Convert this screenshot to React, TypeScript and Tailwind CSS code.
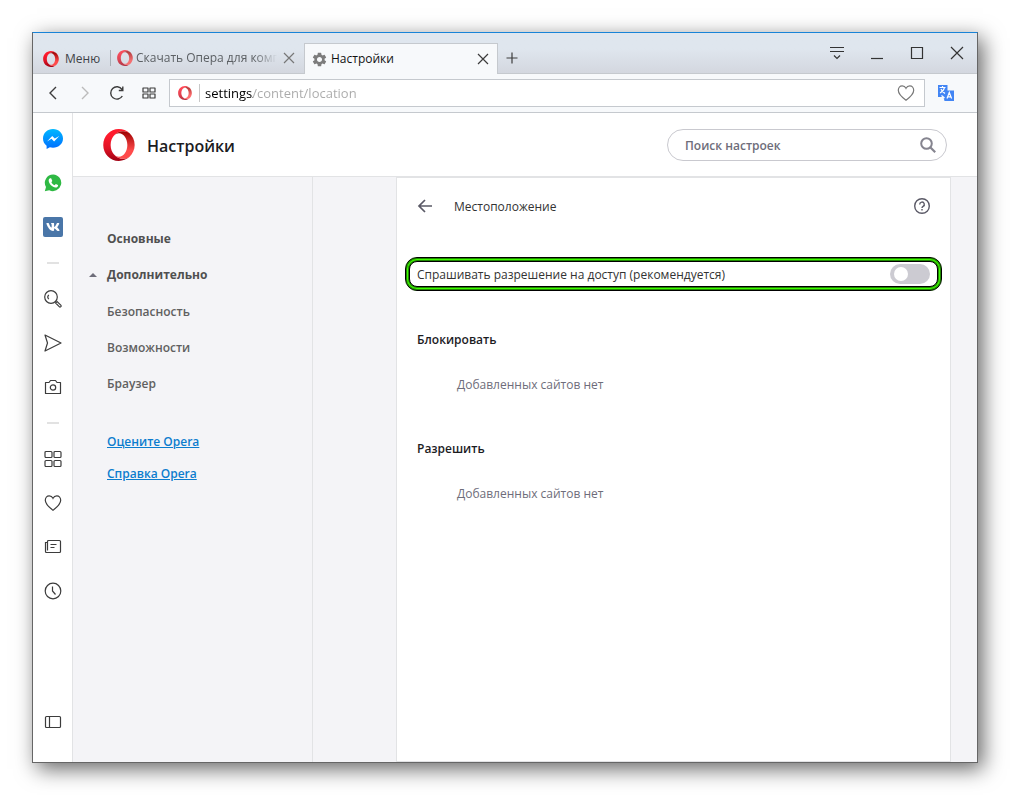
// App.tsx
import { useId, useState } from "react";
import type { ReactNode } from "react";
import { FaVk } from "react-icons/fa";
import { MdSettings } from "react-icons/md";

type IconProps = {
  className?: string;
};

function OperaLogo({ className }: IconProps) {
  const id = useId();
  return (
    <svg className={className} viewBox="3 3 76 76" aria-hidden="true">
      <defs>
        <linearGradient id={`${id}-left`} x1="0" y1="0" x2="0" y2="1">
          <stop offset="0.2" stopColor="#ff1b2d" />
          <stop offset="0.6" stopColor="#e01426" />
          <stop offset="1" stopColor="#a00012" />
        </linearGradient>
        <linearGradient id={`${id}-right`} x1="0" y1="0" x2="0" y2="1">
          <stop offset="0" stopColor="#9c0000" />
          <stop offset="0.7" stopColor="#ff4b4b" />
        </linearGradient>
      </defs>
      <path
        fill={`url(#${id}-left)`}
        d="M28.3 62.4c-4.2-4.9-6.9-12.2-7.1-20.4v-2c.2-8.2 2.9-15.5 7.1-20.4 5.4-7 13.4-11.5 22.3-11.5 5.500 0 10.600 1.700 15 4.600C59 6.800 50.200 3.100 40.600 3.100 19.900 3.100 3.600 20 3.600 41s16.300 37.900 37 37.900c9.600 0 18.400-3.700 25-9.700-4.400 2.900-9.500 4.600-15 4.600-8.900 0-16.900-4.400-22.300-11.400z"
      />
      <path
        fill={`url(#${id}-right)`}
        d="M28.300 19.600c3.400-4 7.900-6.500 12.700-6.500 10.900 0 19.800 12.500 19.800 27.900S51.900 68.900 41 68.900c-4.900 0-9.300-2.400-12.700-6.500 5.400 7 13.400 11.500 22.300 11.500 5.500 0 10.600-1.700 15-4.600C73.200 62.300 78.200 52.200 78.200 41s-5-21.400-12.600-28.300c-4.400-2.900-9.500-4.600-15-4.600-8.900 0-16.900 4.500-22.300 11.500z"
      />
    </svg>
  );
}

function LineIcon({ size = 20, children }: { size?: number; children: ReactNode }) {
  return (
    <svg
      width={size}
      height={size}
      viewBox={`0 0 ${size} ${size}`}
      fill="none"
      stroke="currentColor"
      strokeWidth="1.2"
      aria-hidden="true"
    >
      {children}
    </svg>
  );
}

function Messenger() {
  return (
    <svg width="20" height="20" viewBox="0 0 20 20" aria-hidden="true">
      <defs>
        <linearGradient id="messenger" x1="0" y1="0" x2="0" y2="1">
          <stop offset="0" stopColor="#00b8ff" />
          <stop offset="1" stopColor="#006dff" />
        </linearGradient>
      </defs>
      <path
        fill="url(#messenger)"
        d="M10 0C4.400 0 0 4.100 0 9.400c0 3 1.400 5.600 3.600 7.300V20l3.300-1.700c1 .3 2 .4 3.100.4 5.600 0 10-4.100 10-9.300S15.600 0 10 0z"
      />
      <path fill="#fff" d="M4 12.500 9.200 7l2.600 2.600L16.300 7l-5.200 5.500-2.600-2.700z" />
    </svg>
  );
}

function WhatsApp() {
  return (
    <svg width="18" height="18" viewBox="0 0 18 18" aria-hidden="true">
      <path
        fill="#2fb944"
        d="M9.200.5a8.300 8.300 0 0 0-7.200 12.500L.8 17.300l4.400-1.100A8.300 8.300 0 1 0 9.200.5z"
      />
      <path
        fill="#fff"
        d="M6 4.300c-.9.500-1.400 1.300-1.300 2.500.3 3.200 3.500 6.300 6.800 6.700 1.200.1 2.300-.6 2.500-1.500.1-.4.100-.7 0-.9l-2.200-1.100-1.200 1.200c-1.500-.6-2.600-1.600-3.200-2.900l.9-1.200-1-2.500c-.3-.4-.9-.5-1.300-.3z"
      />
    </svg>
  );
}

function Vkontakte() {
  return (
    <span className="flex size-5 items-center justify-center rounded-xs bg-[#4a76a8] text-white">
      <FaVk size={14} />
    </span>
  );
}

function GridIcon({ size }: { size: number }) {
  const cell = size / 2 - 2;
  const far = size / 2 + 1;
  return (
    <LineIcon size={size}>
      <rect x="1" y="1.500" width={cell} height={cell - 1} rx="1" />
      <rect x={far} y="1.500" width={cell} height={cell - 1} rx="1" />
      <rect x="1" y={far + 0.5} width={cell} height={cell - 1} rx="1" />
      <rect x={far} y={far + 0.5} width={cell} height={cell - 1} rx="1" />
    </LineIcon>
  );
}

function HeartIcon() {
  return (
    <LineIcon size={18}>
      <path d="M9 16.300C4.600 13 1.300 10 1.300 6.300c0-2.600 1.700-4.500 3.900-4.500 1.700 0 3 .9 3.800 2.500.8-1.600 2.100-2.500 3.800-2.500 2.200 0 3.900 1.900 3.900 4.500 0 3.700-3.300 6.700-7.700 10z" />
    </LineIcon>
  );
}

function CloseIcon({ size }: { size: number }) {
  return (
    <LineIcon size={size}>
      <path d={`M1 1 ${size - 1} ${size - 1}M${size - 1} 1 1 ${size - 1}`} />
    </LineIcon>
  );
}

function TranslateIcon() {
  return (
    <svg width="16" height="16" viewBox="0 0 16 16" aria-hidden="true">
      <path fill="#4285f4" d="M0 0h9.500v5.500H16V16H6.500l-1-4H0z" />
      <path
        fill="none"
        stroke="#fff"
        strokeWidth="1.200"
        d="M1.500 2.500h6M4.500 1v1.500M6.500 2.500C6 5 4 7 2 8M3 4c1 2.500 2.500 3.500 4 4.500M3.500 10.500l3 2.500M9 13.500l2.300-6 2.300 6M9.800 11.800h3"
      />
    </svg>
  );
}

function SidebarButton({ label, children }: { label: string; children: ReactNode }) {
  return (
    <button className="flex h-11 w-full items-center justify-center text-[#3c3c3c]" aria-label={label}>
      {children}
    </button>
  );
}

function SidebarDivider() {
  return (
    <div className="flex h-7 items-center justify-center">
      <span className="h-0.5 w-3 bg-[#e2e2e2]" />
    </div>
  );
}

function Sidebar() {
  return (
    <aside className="flex w-10 shrink-0 flex-col border-r border-[#e2e3e5] bg-white pt-1 pb-[18px]">
      <SidebarButton label="Messenger">
        <Messenger />
      </SidebarButton>
      <SidebarButton label="WhatsApp">
        <WhatsApp />
      </SidebarButton>
      <SidebarButton label="ВКонтакте">
        <Vkontakte />
      </SidebarButton>
      <SidebarDivider />
      <SidebarButton label="Поиск">
        <LineIcon size={18}>
          <circle cx="7" cy="7" r="6.300" />
          <path d="M4.800 9.200a3.200 3.200 0 0 1 0-4.400M11.600 13l1.500-1.500 3.700 3.600a1.100 1.100 0 0 1-1.600 1.600z" />
        </LineIcon>
      </SidebarButton>
      <SidebarButton label="Моя лента">
        <LineIcon size={18}>
          <path d="M1 1 17 9 1 17 3.500 9z" strokeLinejoin="round" />
        </LineIcon>
      </SidebarButton>
      <SidebarButton label="Снимок">
        <LineIcon size={18}>
          <path d="M1.500 4.500H5l1.500-2h5l1.500 2h3.500v11h-15z" strokeLinejoin="round" />
          <circle cx="9" cy="9.500" r="2.700" />
        </LineIcon>
      </SidebarButton>
      <SidebarDivider />
      <SidebarButton label="Экспресс-панель">
        <GridIcon size={18} />
      </SidebarButton>
      <SidebarButton label="Закладки">
        <HeartIcon />
      </SidebarButton>
      <SidebarButton label="Новости">
        <LineIcon size={18}>
          <path d="M3.500 12.500v-9a1 1 0 0 1 1-1h11a1 1 0 0 1 1 1v10a1 1 0 0 1-1 1h-13a1 1 0 0 1-1-1v-9h2M6.500 6.500h6M6.500 9.500h4" />
        </LineIcon>
      </SidebarButton>
      <SidebarButton label="История">
        <LineIcon size={18}>
          <circle cx="9" cy="9" r="7.800" />
          <path d="M8.500 4.500V9l3 3.500" />
        </LineIcon>
      </SidebarButton>
      <div className="mt-auto">
        <SidebarButton label="Боковая панель">
          <LineIcon size={18}>
            <rect x="1.500" y="3.500" width="15" height="11" rx="1" />
            <path d="M5.500 3.500v11" />
          </LineIcon>
        </SidebarButton>
      </div>
    </aside>
  );
}

function TabBar() {
  return (
    <div className="flex h-[41px] border-b border-[#c5c9ce] bg-linear-to-b from-[#dfe6ee] from-40% to-[#d3d7df]">
      <button className="mt-3 flex w-[67px] items-center gap-1.5 pl-2.5 text-xs text-[#3f4347]">
        <OperaLogo className="size-4 shrink-0" />
        Меню
      </button>
      <span className="mt-[17px] ml-[10px] h-4 w-px bg-[#a9aeb4]" />
      <div className="mt-2.5 ml-1.5 flex w-[180px] items-center gap-[3px] text-xs text-[#5c6064]">
        <OperaLogo className="size-4 shrink-0 opacity-75" />
        <span className="w-[144px] overflow-hidden whitespace-nowrap [mask-image:linear-gradient(to_right,black_82%,transparent_98%)]">
          Скачать Опера для компь
        </span>
        <button className="shrink-0 text-[#777]" aria-label="Закрыть вкладку">
          <CloseIcon size={12} />
        </button>
      </div>
      <div className="z-10 mt-2.5 -mb-px ml-[7px] flex w-[194px] items-center border border-b-0 border-[#c5c9ce] bg-[#f7f9fb] pr-2 pl-1.5 text-xs text-[#111]">
        <MdSettings className="mr-[3px] text-[#7c7c7c]" size={17} />
        Настройки
        <button className="ml-auto text-[#3c3c3c]" aria-label="Закрыть вкладку">
          <CloseIcon size={12} />
        </button>
      </div>
      <button className="mt-2.5 ml-2 text-[#3c3c3c]" aria-label="Новая вкладка">
        <LineIcon size={12}>
          <path d="M6 .5v11M.5 6h11" />
        </LineIcon>
      </button>
      <div className="ml-auto flex h-10 text-[#333]">
        <button className="flex w-10 items-center justify-center" aria-label="Меню вкладок">
          <LineIcon size={16}>
            <path d="M1 2.500h14M1 6.500h14M5 10.500l3 3 3-3" />
          </LineIcon>
        </button>
        <button className="flex w-10 items-center justify-center" aria-label="Свернуть">
          <LineIcon size={16}>
            <path d="M2 13.500h12" />
          </LineIcon>
        </button>
        <button className="flex w-10 items-center justify-center" aria-label="Развернуть">
          <LineIcon size={16}>
            <path d="M2.500 2.500h11v11h-11z" />
          </LineIcon>
        </button>
        <button className="flex w-10 items-center justify-center" aria-label="Закрыть">
          <CloseIcon size={14} />
        </button>
      </div>
    </div>
  );
}

function Toolbar() {
  const [url, setUrl] = useState("settings/content/location");
  return (
    <div className="flex h-[39px] items-center border-b border-[#c5c9ce] bg-[#f7f9fb] pl-1 text-[#3c3c3c]">
      <button className="flex w-8 justify-center" aria-label="Назад">
        <LineIcon size={16}>
          <path d="M11 2 5 8l6 6" strokeWidth="1.400" />
        </LineIcon>
      </button>
      <button className="flex w-8 justify-center text-[#bbb]" aria-label="Вперёд">
        <LineIcon size={16}>
          <path d="m5 2 6 6-6 6" strokeWidth="1.400" />
        </LineIcon>
      </button>
      <button className="flex w-8 justify-center" aria-label="Обновить">
        <LineIcon size={16}>
          <path d="M13.300 11A6.200 6.200 0 1 1 13 4.400M13.800 1.500v4h-4" strokeWidth="1.400" />
        </LineIcon>
      </button>
      <button className="flex w-8 justify-center" aria-label="Экспресс-панель">
        <LineIcon size={14}>
          <path d="M1 2h5v4H1zM8 2h5v4H8zM1 8h5v4H1zM8 8h5v4H8z" strokeLinejoin="round" />
        </LineIcon>
      </button>
      <div className="ml-1 flex h-7 flex-1 items-center border border-[#c5c9ce] bg-white pl-2">
        <OperaLogo className="size-[14px] opacity-80" />
        <span className="ml-[7px] h-[18px] w-px bg-[#c8c8c8]" />
        {/* the host part of the address is darker than its path */}
        <input
          className="ml-[5px] min-w-0 flex-1 bg-linear-to-r from-black from-[48px] to-[#a9a9a9] to-[48px] bg-clip-text pt-0.5 text-[13px] text-transparent outline-none"
          aria-label="Адрес"
          value={url}
          onChange={(e) => setUrl(e.target.value)}
        />
        <button className="mr-[9px] text-[#777]" aria-label="Добавить в закладки">
          <HeartIcon />
        </button>
      </div>
      <button className="mr-[23px] ml-[13px]" aria-label="Перевести">
        <TranslateIcon />
      </button>
    </div>
  );
}

function PageHeader() {
  return (
    <header className="flex h-16 items-center border-b border-[#e2e3e5] bg-white px-[30px]">
      <OperaLogo className="size-8" />
      <h1 className="ml-3 pt-0.5 text-base font-semibold text-[#1c1c1f]">Настройки</h1>
      <label className="ml-auto flex h-8 w-[280px] items-center rounded-full border border-[#c9c9cf] pr-2.5 pl-[17px]">
        <input
          className="min-w-0 flex-1 pt-0.5 text-xs font-semibold outline-none placeholder:text-[#6e6d7a]"
          placeholder="Поиск настроек"
          aria-label="Поиск настроек"
        />
        <svg width="16" height="16" viewBox="0 0 16 16" fill="none" stroke="#85848f" aria-hidden="true">
          <circle cx="6.500" cy="6.500" r="5.300" strokeWidth="2" />
          <path d="m10.500 10.500 4.700 4.700" strokeWidth="2.200" />
        </svg>
      </label>
    </header>
  );
}

const sections = ["Безопасность", "Возможности", "Браузер"];
const links = ["Оцените Opera", "Справка Opera"];

function SettingsNav() {
  return (
    <nav className="w-60 shrink-0 border-r border-[#e2e3e5] pt-11 pl-[34px] text-xs text-[#505050]">
      <button className="flex h-9 items-center font-bold">Основные</button>
      <button className="-ml-[18px] flex h-9 items-center gap-2.5 font-bold" aria-expanded="true">
        <svg width="8" height="4" viewBox="0 0 8 4" aria-hidden="true">
          <path d="M0 4 4 0l4 4z" fill="#6e6d7a" />
        </svg>
        Дополнительно
      </button>
      <div className="mt-px">
        {sections.map((name) => (
          <button key={name} className="flex h-9 items-center font-semibold text-[#606060]">
            {name}
          </button>
        ))}
      </div>
      <div className="mt-6">
        {links.map((name) => (
          <a key={name} href="#" className="flex h-8 items-center font-semibold text-[#0c7dce] underline">
            {name}
          </a>
        ))}
      </div>
    </nav>
  );
}

function SiteList({ title }: { title: string }) {
  return (
    <section className="px-5 text-xs">
      <h3 className="flex h-9 items-center font-semibold text-[#1c1c1f]">{title}</h3>
      <p className="mt-[9px] mb-7 flex h-9 items-center pl-10 text-[#6e6d7a]">Добавленных сайтов нет</p>
    </section>
  );
}

function LocationPanel() {
  const [ask, setAsk] = useState(false);
  return (
    <main className="mr-[26px] ml-[83px] flex-1 border border-[#e2e3e5] bg-white">
      <div className="flex h-14 items-center px-5 text-[#5a5966]">
        <button aria-label="Назад">
          <LineIcon size={16}>
            <path d="M15 8H2M8 2 2 8l6 6" strokeWidth="1.700" />
          </LineIcon>
        </button>
        <h2 className="ml-[21px] pt-0.5 text-xs text-[#333]">Местоположение</h2>
        <button className="ml-auto" aria-label="Справка">
          <LineIcon size={16}>
            <circle cx="8" cy="8" r="7.300" strokeWidth="1.400" />
            <path d="M5.700 6.400a2.300 2.300 0 1 1 3.400 2c-.8.500-1.100.8-1.100 1.600M8 11v1.500" strokeWidth="1.400" />
          </LineIcon>
        </button>
      </div>
      <div className="mx-2 mt-[23px] rounded-xl border border-black bg-[#3fff00] p-[3px] shadow-[inset_0_0_0_1px_#1f8a00]">
        <label className="flex h-[26px] items-center justify-between rounded-lg border border-black bg-white px-[7px] text-xs text-[#333] shadow-[0_0_0_1px_#1f8a00]">
          <span className="pt-0.5">Спрашивать разрешение на доступ (рекомендуется)</span>
          <input
            type="checkbox"
            className="flex h-5 w-10 appearance-none items-center rounded-full bg-[#cccbd2] px-1 before:size-3.5 before:rounded-full before:bg-white checked:justify-end checked:bg-[#0c7dce]"
            checked={ask}
            onChange={(e) => setAsk(e.target.checked)}
          />
        </label>
      </div>
      <div className="mt-[31px]">
        <SiteList title="Блокировать" />
        <SiteList title="Разрешить" />
      </div>
    </main>
  );
}

export default function App() {
  return (
    <div className="flex min-h-screen bg-white p-8 font-['Open_Sans','Noto_Sans',sans-serif]">
      <div className="flex min-w-0 flex-1 flex-col border border-t-[#1883d7] border-r-[#666] border-b-[#666] border-l-[#666] shadow-[5px_6px_20px_rgba(0,0,0,0.6)]">
        <TabBar />
        <Toolbar />
        <div className="flex flex-1">
          <Sidebar />
          <div className="flex min-w-0 flex-1 flex-col bg-[#f4f4f7]">
            <PageHeader />
            <div className="flex flex-1">
              <SettingsNav />
              <LocationPanel />
            </div>
          </div>
        </div>
      </div>
    </div>
  );
}
